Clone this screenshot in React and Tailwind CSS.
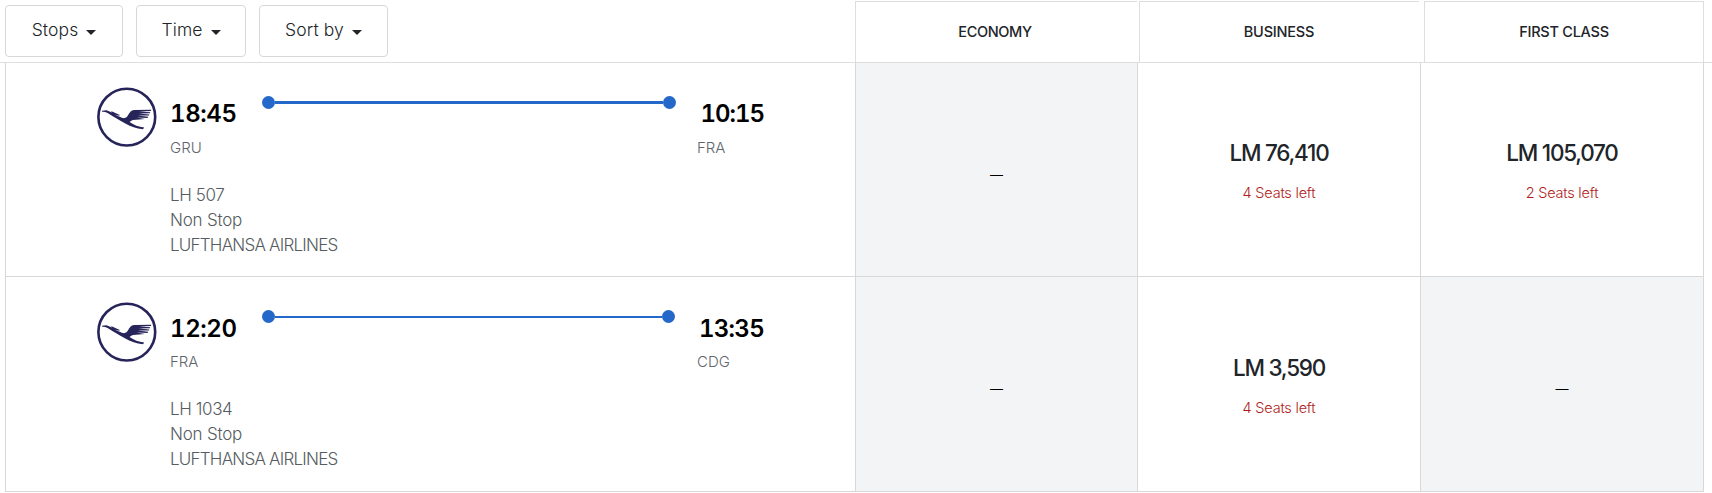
import React from "react";

const cabins = [
  { name: "ECONOMY", box: "ml-[467px] w-[284px]", line: "w-[281px]", text: "pl-[1px] pr-[6px] tracking-[-0.35px]" },
  { name: "BUSINESS", box: "w-[285px]", line: "w-[279px]", text: "pr-[6px] tracking-[-0.2px]" },
  { name: "FIRST CLASS", box: "w-[280px] border-r", line: "w-full", text: "tracking-[-0.25px]" },
];

const filters = [
  { label: "Stops", width: "w-[118px]", gap: "mr-[13px]" },
  { label: "Time", width: "w-[110px]", gap: "mr-[13px]" },
  { label: "Sort by", width: "w-[129px]", gap: "" },
];

const flights = [
  {
    number: "LH 507",
    depart: "18:45",
    from: "GRU",
    arrive: "10:15",
    to: "FRA",
    row: "h-[214px]",
    code: "mt-[8px]",
    line: "h-[3px]",
    track: "mt-[9px] w-[414px]",
    arriveTracking: "tracking-[-1px]",
    prices: [null, { amount: "LM 76,410", seats: "4 Seats left" }, { amount: "LM 105,070", seats: "2 Seats left" }],
  },
  {
    number: "LH 1034",
    depart: "12:20",
    from: "FRA",
    arrive: "13:35",
    to: "CDG",
    row: "h-[215px]",
    code: "mt-[7px]",
    line: "h-[2px]",
    track: "mt-[8px] w-[413px]",
    arriveTracking: "tracking-[-0.7px]",
    prices: [null, { amount: "LM 3,590", seats: "4 Seats left" }, null],
  },
];

const columns = ["w-[282px]", "w-[283px]", "w-[284px] border-r"];

const AirlineLogo = () => (
  <svg viewBox="0 0 60 60" className="h-[60px] w-[60px] shrink-0">
    <circle cx="29.8" cy="30.1" r="28.4" fill="none" stroke="#262459" strokeWidth="2.6" />
    <path
      fill="#262459"
      d="M5 23.8 L9.5 23.3 L15 25.4 L14 23.9 L22.8 28 L22.2 28.7 L17.5 27.6 L25.5 31 C28.5 31.6 30 30.5 31.5 27.6 C33.5 24 35 23.1 38 23 L54.3 22.7 L53.8 23.9 L42 24.6 L53.3 25.3 L52.9 26.2 L41.4 26.5 L52.4 27.6 L51.9 28.6 L40.6 28.4 L51.2 29.8 L50.6 30.9 L39.6 30.4 L48 31.9 L36 33 C34.8 33.4 33.6 34.2 32.6 35 C37 38 41.5 40 47.2 40.4 L46 42.3 C39 41.4 34 39.4 28.8 36.7 C22 33 16 29.4 11 26.2 C9 25 7 24.9 5 24.8 Z"
    />
  </svg>
);

const Caret = () => (
  <svg viewBox="0 0 10 5" className="mt-[3px] h-[5px] w-[10px]">
    <path d="M0 0 H10 L5 5 Z" fill="#212529" />
  </svg>
);

const FlightRow = ({ flight, last }) => (
  <div className={`flex w-[1699px] border-b border-[#d6d8da] ${flight.row}`}>
    <div className={`flex w-[850px] border-l border-[#d6d8da] pl-[91px] ${last ? "pt-[25px]" : "pt-[24px]"}`}>
      <AirlineLogo />
      <div className="ml-[13px] w-[92px] pt-[11px]">
        <div className="text-[24px] leading-[32px] font-semibold tracking-[-0.4px] text-black tabular-nums">{flight.depart}</div>
        <div className={`text-[15px] leading-5 font-light text-[#5f656b] ${flight.code}`}>{flight.from}</div>
        <div className="mt-[25px] text-[17px] leading-[25px] font-light whitespace-nowrap text-[#565c62]">
          <div className="tracking-[-0.4px]">{flight.number}</div>
          <div className="tracking-[-0.2px]">Non Stop</div>
          <div className="tracking-[-0.77px]">LUFTHANSA AIRLINES</div>
        </div>
      </div>
      <div className={`flex h-[13px] items-center justify-between ${flight.track}`}>
        <div className="h-[13px] w-[13px] rounded-full bg-[#2468c9]" />
        <div className={`grow bg-[#2468c9] ${flight.line}`} />
        <div className="h-[13px] w-[13px] rounded-full bg-[#2468c9]" />
      </div>
      <div className="ml-auto w-[158px] pt-[11px]">
        <div className={`w-[67px] text-right text-[24px] leading-[32px] font-semibold text-black tabular-nums ${flight.arriveTracking}`}>
          {flight.arrive}
        </div>
        <div className={`text-[15px] leading-5 font-light text-[#5f656b] ${flight.code}`}>{flight.to}</div>
      </div>
    </div>
    {flight.prices.map((price, i) => (
      <div
        key={i}
        className={`flex flex-col items-center border-l border-[#d6d8da] ${columns[i]} ${price ? "" : "bg-[#f3f4f6]"}`}
      >
        {price ? (
          <>
            <div className={`text-[22.5px] leading-8 font-medium tracking-[-1.25px] text-[#212529] ${last ? "mt-[75px]" : "mt-[74px]"}`}>
              {price.amount}
            </div>
            <div className="mt-[14px] text-[14.5px] leading-5 font-light tracking-[-0.22px] text-[#b01c20]">{price.seats}</div>
          </>
        ) : (
          <div className="mt-[100px] text-[13px] leading-6 text-black">—</div>
        )}
      </div>
    ))}
  </div>
);

const App = () => {
  return (
    <div className="h-[493px] w-[1712px] overflow-hidden bg-white font-['Inter',sans-serif] text-[#212529]">
      <div className="flex h-[63px] border-b border-[#dcdedf] pl-[5px]">
        {filters.map((filter) => (
          <button
            key={filter.label}
            className={`mt-[5px] flex h-[52px] shrink-0 items-center justify-center gap-[8px] rounded-[4px] border border-[#d6d8da] pb-px text-[17.5px] font-light tracking-[0.1px] ${filter.width} ${filter.gap}`}
          >
            {filter.label}
            <Caret />
          </button>
        ))}
        {cabins.map((cabin) => (
          <div key={cabin.name} className={`mt-[1px] shrink-0 border-l border-[#dcdedf] ${cabin.box}`}>
            <div className={`border-t border-[#dcdedf] ${cabin.line}`} />
            <div className={`pt-[20px] text-center text-[14.5px] leading-5 font-medium ${cabin.text}`}>{cabin.name}</div>
          </div>
        ))}
      </div>
      <div className="pl-[5px]">
        {flights.map((flight, i) => (
          <FlightRow key={flight.number} flight={flight} last={i === flights.length - 1} />
        ))}
      </div>
    </div>
  );
};

export default App;
